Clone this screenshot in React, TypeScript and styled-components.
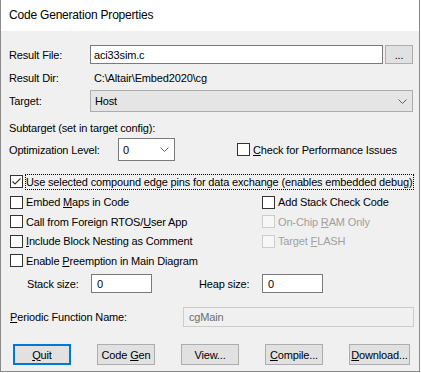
import React from "react";
import styled, { createGlobalStyle } from "styled-components";

const GlobalStyle = createGlobalStyle`
  html, body {
    margin: 0;
    padding: 0;
    background: #ffffff;
  }
  body {
    font-family: "Liberation Sans", Arial, sans-serif;
    font-size: 11px;
    letter-spacing: -0.15px;
    color: #000;
  }
`;

const Window = styled.div`
  width: 418px;
  border-left: 1px solid #8a8a8a;
  border-right: 1px solid #8a8a8a;
  border-bottom: 1px solid #8a8a8a;
  background: #f0f0f0;
`;

const TitleBar = styled.div`
  height: 31px;
  background: #ffffff;
  display: flex;
  align-items: center;
  padding-left: 8px;
  font-size: 12px;
  letter-spacing: -0.2px;
  padding-bottom: 1px;
  box-sizing: border-box;
`;

const Body = styled.div`
  padding: 0 8px 6px 8px;
  display: flex;
  flex-direction: column;
`;

const Row = styled.div<{ $mt: number; $h: number; $pl?: number }>`
  display: flex;
  align-items: center;
  margin-top: ${(p) => p.$mt}px;
  height: ${(p) => p.$h}px;
  padding-left: ${(p) => p.$pl ?? 0}px;
  white-space: nowrap;
`;

const Label = styled.span<{ $w?: number; $ml?: number }>`
  display: inline-block;
  width: ${(p) => (p.$w ? `${p.$w}px` : "auto")};
  margin-left: ${(p) => p.$ml ?? 0}px;
  flex-shrink: 0;
`;

const Value = styled.span`
  padding-left: 4px;
`;

const TextBox = styled.div<{ $w: number; $disabled?: boolean; $pl?: number }>`
  box-sizing: border-box;
  width: ${(p) => p.$w}px;
  height: 100%;
  border: 1px solid ${(p) => (p.$disabled ? "#cccccc" : "#7a7a7a")};
  background: ${(p) => (p.$disabled ? "#f0f0f0" : "#ffffff")};
  color: ${(p) => (p.$disabled ? "#6d6d6d" : "#000")};
  display: flex;
  align-items: center;
  padding-left: ${(p) => p.$pl ?? 3}px;
  flex-shrink: 0;
`;

const Combo = styled.div<{ $w: number; $flat?: boolean }>`
  box-sizing: border-box;
  width: ${(p) => p.$w}px;
  height: 100%;
  border: 1px solid ${(p) => (p.$flat ? "#adadad" : "#7a7a7a")};
  background: ${(p) => (p.$flat ? "#e5e5e5" : "#ffffff")};
  display: flex;
  align-items: center;
  justify-content: space-between;
  padding: 0 5px 0 4px;
  flex-shrink: 0;
`;

const SmallButton = styled.div<{ $w: number; $focus?: boolean; $ml?: number }>`
  box-sizing: border-box;
  width: ${(p) => p.$w}px;
  height: 100%;
  margin-left: ${(p) => p.$ml ?? 0}px;
  border: ${(p) => (p.$focus ? "2px solid #0078d7" : "1px solid #adadad")};
  background: #e1e1e1;
  display: flex;
  align-items: center;
  justify-content: center;
  flex-shrink: 0;
`;

const CheckGrid = styled.div`
  display: grid;
  grid-template-columns: 252px 1fr;
  grid-template-rows: 20px 19px 20px 19px;
  margin-top: 2px;
  padding-left: 1px;
`;

const CheckItem = styled.div<{ $disabled?: boolean; $ml?: number }>`
  display: flex;
  align-items: center;
  gap: 3px;
  margin-left: ${(p) => p.$ml ?? 0}px;
  color: ${(p) => (p.$disabled ? "#a0a0a0" : "#000")};
  white-space: nowrap;
`;

const Box = styled.span<{ $disabled?: boolean }>`
  box-sizing: border-box;
  width: 13px;
  height: 13px;
  border: 1px solid ${(p) => (p.$disabled ? "#cccccc" : "#333333")};
  background: ${(p) => (p.$disabled ? "#f7f7f7" : "#ffffff")};
  display: inline-flex;
  flex-shrink: 0;
`;

const Focus = styled.span`
  outline: 1px dotted #000;
  outline-offset: 0;
  padding: 1px 1px 1px 0;
`;

const ButtonBar = styled.div`
  display: flex;
  gap: 26px;
  margin-top: 17px;
  height: 21px;
  padding-left: 4px;
`;

const Checkbox = ({ checked, disabled }: { checked?: boolean; disabled?: boolean }) => (
  <Box $disabled={disabled}>
    {checked && (
      <svg width="11" height="11" viewBox="0 0 11 11">
        <path d="M1.5 5.5 L4 8 L9.5 2.5" fill="none" stroke="#333" strokeWidth="1.1" />
      </svg>
    )}
  </Box>
);

const Chevron = () => (
  <svg width="9" height="5" viewBox="0 0 9 5">
    <path d="M0.5 0.5 L4.5 4.5 L8.5 0.5" fill="none" stroke="#606060" strokeWidth="1" />
  </svg>
);

export default function App() {
  return (
    <>
      <GlobalStyle />
      <Window>
        <TitleBar>Code Generation Properties</TitleBar>
        <Body>
          <Row $mt={14} $h={19}>
            <Label $w={81}>Result File:</Label>
            <TextBox $w={293}>aci33sim.c</TextBox>
            <SmallButton $w={28} $ml={2}>...</SmallButton>
          </Row>
          <Row $mt={5} $h={18}>
            <Label $w={81}>Result Dir:</Label>
            <Value>C:\Altair\Embed2020\cg</Value>
          </Row>
          <Row $mt={3} $h={22}>
            <Label $w={81}>Target:</Label>
            <Combo $w={323} $flat>
              <span>Host</span>
              <Chevron />
            </Combo>
          </Row>
          <Row $mt={8} $h={16}>
            <Label>Subtarget (set in target config):</Label>
          </Row>
          <Row $mt={2} $h={23}>
            <Label $w={109}>Optimization Level:</Label>
            <Combo $w={57}>
              <span>0</span>
              <Chevron />
            </Combo>
            <CheckItem $ml={62}>
              <Checkbox />
              <span>
                <u>C</u>heck for Performance Issues
              </span>
            </CheckItem>
          </Row>
          <Row $mt={12} $h={17} $pl={1}>
            <CheckItem>
              <Checkbox checked />
              <Focus>Use selected compound edge pins for data exchange (enables embedded debug)</Focus>
            </CheckItem>
          </Row>
          <CheckGrid>
            <CheckItem>
              <Checkbox />
              <span>
                Embed <u>M</u>aps in Code
              </span>
            </CheckItem>
            <CheckItem>
              <Checkbox />
              <span>Add Stack Check Code</span>
            </CheckItem>
            <CheckItem>
              <Checkbox />
              <span>
                Call from Foreign RTOS/<u>U</u>ser App
              </span>
            </CheckItem>
            <CheckItem $disabled>
              <Checkbox disabled />
              <span>
                On-Chip <u>R</u>AM Only
              </span>
            </CheckItem>
            <CheckItem>
              <Checkbox />
              <span>
                <u>I</u>nclude Block Nesting as Comment
              </span>
            </CheckItem>
            <CheckItem $disabled>
              <Checkbox disabled />
              <span>
                Target <u>F</u>LASH
              </span>
            </CheckItem>
            <CheckItem>
              <Checkbox />
              <span>
                Enable <u>P</u>reemption in Main Diagram
              </span>
            </CheckItem>
          </CheckGrid>
          <Row $mt={4} $h={19} $pl={18}>
            <Label $w={64}>Stack size:</Label>
            <TextBox $w={61} $pl={5}>0</TextBox>
            <Label $w={63} $ml={47}>Heap size:</Label>
            <TextBox $w={61} $pl={5}>0</TextBox>
          </Row>
          <Row $mt={14} $h={20} $pl={1}>
            <Label $w={173}>
              <u>P</u>eriodic Function Name:
            </Label>
            <TextBox $w={231} $pl={5} $disabled>
              cgMain
            </TextBox>
          </Row>
          <ButtonBar>
            <SmallButton $w={58} $focus>
              <span>
                <u>Q</u>uit
              </span>
            </SmallButton>
            <SmallButton $w={58}>
              <span>
                Code <u>G</u>en
              </span>
            </SmallButton>
            <SmallButton $w={58}>View...</SmallButton>
            <SmallButton $w={58}>
              <span>
                <u>C</u>ompile...
              </span>
            </SmallButton>
            <SmallButton $w={61}>
              <span>
                <u>D</u>ownload...
              </span>
            </SmallButton>
          </ButtonBar>
        </Body>
      </Window>
    </>
  );
}
